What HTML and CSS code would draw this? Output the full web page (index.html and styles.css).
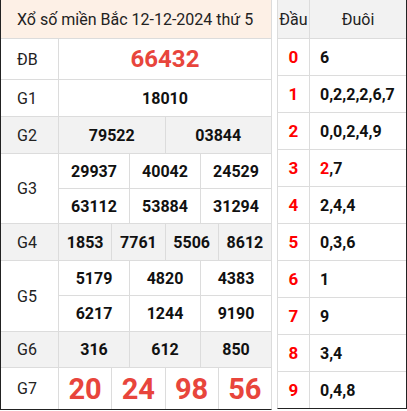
FILE: index.html
```html
<!DOCTYPE html>
<html lang="vi">
<head>
<meta charset="utf-8">
<link rel="stylesheet" href="styles.css">
</head>
<body>
<div class="page">
  <div class="kq">
    <div class="title">Xổ số miền Bắc 12-12-2024 thứ 5</div>

    <div class="lbl r-db">ĐB</div>
    <div class="num db s12">66432</div>

    <div class="lbl">G1</div>
    <div class="num s12">18010</div>

    <div class="lbl gray">G2</div>
    <div class="num gray s6">79522</div>
    <div class="num gray s6">03844</div>

    <div class="lbl span2">G3</div>
    <div class="num s4">29937</div>
    <div class="num s4">40042</div>
    <div class="num s4">24529</div>
    <div class="num s4">63112</div>
    <div class="num s4">53884</div>
    <div class="num s4">31294</div>

    <div class="lbl gray">G4</div>
    <div class="num gray s3">1853</div>
    <div class="num gray s3">7761</div>
    <div class="num gray s3">5506</div>
    <div class="num gray s3">8612</div>

    <div class="lbl span2">G5</div>
    <div class="num s4">5179</div>
    <div class="num s4">4820</div>
    <div class="num s4">4383</div>
    <div class="num s4">6217</div>
    <div class="num s4">1244</div>
    <div class="num s4">9190</div>

    <div class="lbl gray">G6</div>
    <div class="num gray s4">316</div>
    <div class="num gray s4">612</div>
    <div class="num gray s4">850</div>

    <div class="lbl">G7</div>
    <div class="num g7 s3">20</div>
    <div class="num g7 s3">24</div>
    <div class="num g7 s3">98</div>
    <div class="num g7 s3">56</div>
  </div>

  <div class="lt">
    <div class="th">Đầu</div>
    <div class="th">Đuôi</div>
    <div class="dau">0</div><div class="duoi">6</div>
    <div class="dau">1</div><div class="duoi">0,2,2,2,6,7</div>
    <div class="dau">2</div><div class="duoi">0,0,2,4,9</div>
    <div class="dau">3</div><div class="duoi"><span class="hl">2</span>,7</div>
    <div class="dau">4</div><div class="duoi">2,4,4</div>
    <div class="dau">5</div><div class="duoi">0,3,6</div>
    <div class="dau">6</div><div class="duoi">1</div>
    <div class="dau">7</div><div class="duoi">9</div>
    <div class="dau">8</div><div class="duoi">3,4</div>
    <div class="dau">9</div><div class="duoi">0,4,8</div>
  </div>
</div>
</body>
</html>
```

FILE: styles.css
```css
* { box-sizing: border-box; }
html, body { margin: 0; padding: 0; background: #fff; }
body {
  font-family: Roboto, "Liberation Sans", Arial, sans-serif;
  color: #111;
  width: 407px;
  height: 411px;
  overflow: hidden;
}
.page {
  display: flex;
  gap: 5px;
  align-items: flex-start;
}
.kq {
  width: 272px;
  display: grid;
  grid-template-columns: 57px repeat(12, 1fr);
  grid-template-rows: 38px 40px 36px 36px 34px 34px 36px 34px 35px 35px 41px;
  gap: 1px;
  background: #dcdcdc;
  border-left: 1px solid #222;
  border-right: 1px solid #dcdcdc;
  border-bottom: 1px solid #222;
}
.kq > div {
  background: #fff;
  display: flex;
  align-items: center;
  justify-content: center;
}
.kq > .title {
  grid-column: 1 / -1;
  background: #fdf0e6;
  justify-content: flex-start;
  padding-left: 16px;
  font-size: 16px;
  color: #222;
}
.lbl {
  font-size: 16px;
  color: #222;
  justify-content: flex-start !important;
  padding-left: 16px;
}
.span2 { grid-row: span 2; }
.s12 { grid-column: span 12; }
.s6 { grid-column: span 6; }
.s4 { grid-column: span 4; }
.s3 { grid-column: span 3; }
.kq > .gray { background: #f2f2f2; }
.num {
  font-weight: 700;
  font-size: 16px;
  color: #111;
}
.num.db {
  font-size: 24px;
  color: #e8453c;
}
.num.g7 {
  font-size: 29px;
  color: #e8453c;
}
.lt {
  width: 130px;
  display: grid;
  grid-template-columns: 31px 1fr;
  grid-template-rows: 38px repeat(10, 36px);
  gap: 1px;
  background: #dcdcdc;
  border-left: 1px solid #dcdcdc;
  border-right: 1px solid #222;
  border-bottom: 1px solid #222;
}
.lt > div {
  background: #fff;
  display: flex;
  align-items: center;
}
.lt > .th {
  background: #f2f2f2;
  justify-content: center;
  font-size: 16px;
  color: #222;
}
.dau {
  justify-content: center;
  color: #ff0000;
  font-weight: 700;
  font-size: 17px;
}
.duoi {
  padding-left: 10px;
  font-weight: 700;
  font-size: 16px;
  color: #111;
}
.hl { color: #ff0000; }
```
